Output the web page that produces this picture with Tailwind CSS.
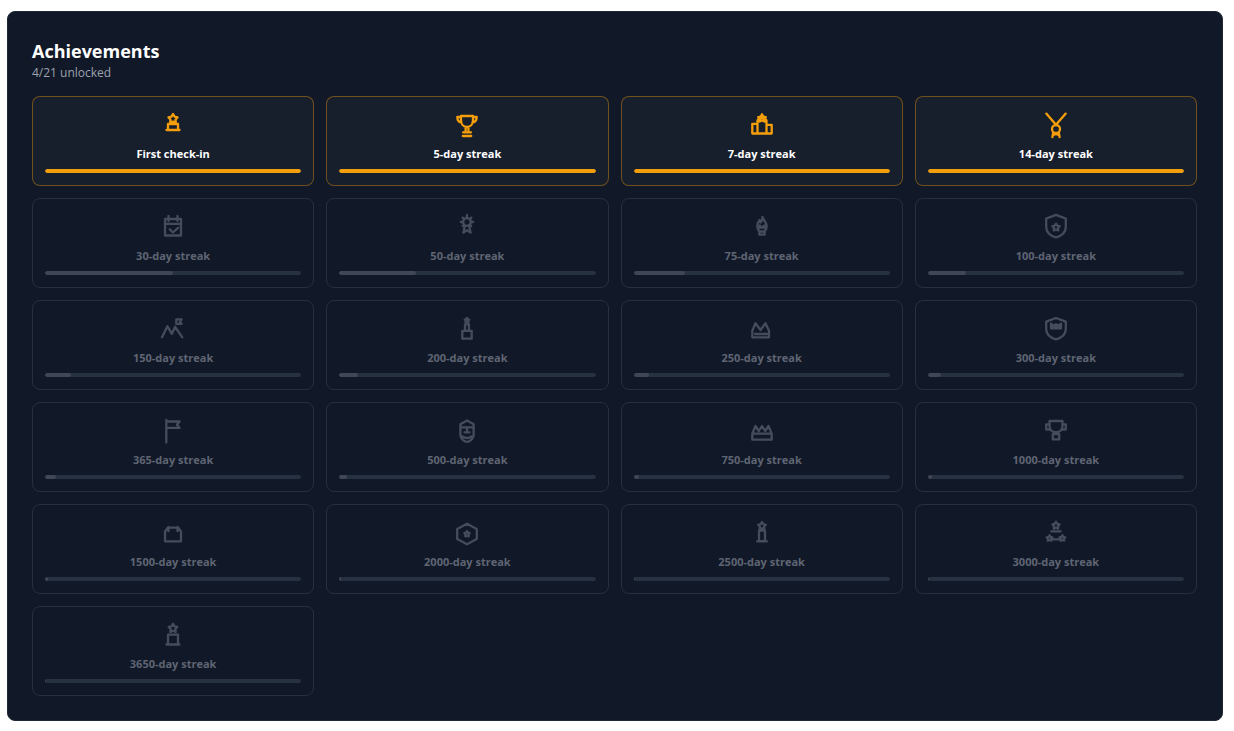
<!DOCTYPE html>
<html lang="en">
<head>
    <meta charset="UTF-8">
    <meta name="viewport" content="width=device-width, initial-scale=1.0">
    <title>Achievements</title>
    <script src="https://cdn.jsdelivr.net/npm/@tailwindcss/browser@4"></script>
</head>
<body class="bg-white font-['Open_Sans','Noto_Sans',sans-serif]">
    <main class="mt-[11px] mr-[11px] ml-[7px]">
        <section class="rounded-lg border border-[#1f2937] bg-[#111827] py-6 pr-[25px] pl-6" aria-labelledby="achievementsTitle">
            <h1 id="achievementsTitle" class="text-[18px] leading-[30px] font-bold text-white">Achievements</h1>
            <p id="unlockedCount" class="mb-4 text-[12px] leading-[14px] text-[#9ca3af]"></p>
            <ul id="achievementGrid" class="grid grid-cols-4 gap-3"></ul>
        </section>
    </main>

    <script>
        const currentStreak = 15;

        // five-pointed star outline around (cx, cy)
        function star(cx, cy, r) {
            const points = [];
            for (let i = 0; i < 10; i++) {
                const radius = i % 2 ? r * 0.55 : r;
                const angle = -Math.PI / 2 + i * Math.PI / 5;
                points.push((cx + radius * Math.cos(angle)).toFixed(2) + ' ' + (cy + radius * Math.sin(angle)).toFixed(2));
            }
            return 'M' + points.join('L') + 'Z';
        }

        // icons are drawn on a 32x32 grid
        const achievements = [
            { days: 1, title: 'First check-in', icon: star(16, 9.8, 4.8) + 'M11 15h10v6H11zM9.5 21h13' },
            { days: 5, icon: 'M10 7h12v4c0 4-2.5 7-6 7s-6-3-6-7zM10 8H6.3c0 3 1.4 5 4.2 5.6M22 8h3.7c0 3-1.4 5-4.2 5.6M14.6 18v5M17.4 18v5M12 23.3h8M11.8 27h8.4' },
            { days: 7, icon: star(16, 9.3, 4) + 'M11.5 11.5h9v13h-9zM12 10.5l4-2 4 2M6.3 14.8h5.2v9.7H6.3zM20.5 15.8h5.2v8.7h-5.2z' },
            { days: 14, icon: 'M6.3 4.6L16 15.8l9.7-11.2M20 20a4 4 0 1 1-8 0a4 4 0 1 1 8 0M13.2 23.8L12.4 28M18.8 23.8l.8 4.2M13 26.3l3-1.3 3 1.3' },
            { days: 30, icon: 'M8 8h16v16.5H8zM8 12.8h16M11.5 5v5M20.5 5v5M12.7 18.3l3.2 3.2 5.2-4.7' },
            { days: 50, icon: 'M19.8 11a3.8 3.8 0 1 1-7.6 0a3.8 3.8 0 1 1 7.6 0M16 4v3M9.8 11h2.4M19.8 11h2.4M11.6 6.6l1.6 1.6M20.4 6.6l-1.6 1.6M11.8 15l1.4-1.4M20.2 15l-1.4-1.4M13.6 15.5L12.4 21.6l3.6-2.3 3.6 2.3-1.2-6.1' },
            { days: 75, icon: 'M16.5 6c.5 3 4.2 5 4.2 9.200 0 2.400-.9 4-2.100 5.100v3.400h-5.200v-3.400c-1.200-1.100-2.100-2.700-2.100-5.100 0-2.800 1.100-4.500 2.300-6.200l1.200 2.400C15.800 10 16.700 8 16.500 6zM13.800 17v-2.500l2.200 2.200 2.200-2.200V17M13.600 20.500h4.800' },
            { days: 100, icon: 'M16 3.8l9.800 3.700v8.200c0 5.200-4 9-9.800 10.800-5.800-1.800-9.800-5.600-9.800-10.800V7.500z' + star(16, 16.4, 3.8) },
            { days: 150, icon: 'M5 24.3l5.400-11 4.500 7.500 3.200-7 7.200 10.500M19.300 10.900V6.400h5.300l-1.600 2.200 1.600 2.300z' },
            { days: 200, icon: 'M11.300 17.800h9.400v7.900h-9.400zM14 17.800v-6.500h4v6.500' + star(16, 7.3, 2.4) },
            { days: 250, icon: 'M6.300 24.300v-6.500l3.200-7.600 5 6.800 5-6.800 3.500 7.600v6.500zM9 21h12' },
            { days: 300, icon: 'M16 5l9.800 3.700V16c0 5.200-4 8.700-9.800 10.400-5.800-1.700-9.800-5.200-9.800-10.400V8.700zM11 15.300v-4.600l2.500 2 2.500-1.500 2.500 1.500 2.500-2v4.600zM12 14h8' },
            { days: 365, icon: 'M9.300 5v22.500M9.300 6.500h13.300l-2.700 3.200 2.700 3.200H9.300' },
            { days: 500, icon: 'M16 5.500l6.600 3.800v11.500c-1 3-3.500 5.300-6.600 6.200-3.100-.9-5.600-3.200-6.600-6.200V9.300zM10 12.300h12M16 12.300v4.700M13.500 17.300h5M11.500 21.500c2.500 2 6.500 2 9 0' },
            { days: 750, icon: 'M6.300 24.700v-6l3.200-7.700 3.300 5L16 11l3.200 5 3.300-5 3.200 7.700v6zM6.500 18.700h19' },
            { days: 1000, icon: 'M9.500 6h13v4.500c0 4-2.700 6.700-6.500 6.700s-6.500-2.700-6.500-6.700zM9.500 9.300H6.200v5.200h4.300M22.500 9.300h3.300v5.200h-4.300M14.500 17.200v2M17.500 17.200v2M12.800 19.200h6.400v5.200h-6.400z' },
            { days: 1500, icon: 'M8 24.300v-9.600l2.700-4h10.600l2.700 4v9.600zM11.500 10v4.200M20.500 10v4.200' },
            { days: 2000, icon: 'M16 6.700l9.800 5.300v10L16 27.200 6.200 22V12z' + star(16, 17, 2.9) },
            { days: 2500, icon: star(16, 9, 4) + 'M13 13.600h6v10.600h-6zM11 24.300h10' },
            { days: 3000, icon: star(16, 8.6, 3.8) + star(9.6, 21.3, 3) + star(22.4, 21.3, 3) + 'M11.300 14.300h9.400M13 22.300h6' },
            { days: 3650, icon: star(16, 9.3, 4.5) + 'M11 15.700h10v9.600H11zM9.500 25.500h13' }
        ];

        function renderCard(item) {
            const unlocked = currentStreak >= item.days;
            const title = item.title || `${item.days}-day streak`;
            const percent = Math.min(100, currentStreak / item.days * 100);
            const card = unlocked ? 'border-[#f59e0b]/40 bg-[#171e2c]' : 'border-[#253040]';
            const icon = unlocked ? 'text-[#f59e0b]' : 'text-[#454c5b]';
            const label = unlocked ? 'text-white' : 'text-[#5f6573]';
            const track = unlocked ? 'bg-[#374151]' : 'bg-[#263142]';
            const fill = unlocked ? 'bg-[#f59e0b]' : 'bg-[#414755]';

            return `
                <li class="flex flex-col items-center rounded-lg border p-3 ${card}">
                    <svg class="size-8 ${icon}" viewBox="0 0 32 32" fill="none" stroke="currentColor" stroke-width="2.3" stroke-linecap="round" stroke-linejoin="round" aria-hidden="true">
                        <path d="${item.icon}"/>
                    </svg>
                    <h2 class="mt-1 text-[11px] leading-[18px] font-bold ${label}">${title}</h2>
                    <div class="mt-[6px] h-1 w-full overflow-hidden rounded-full ${track}" role="progressbar" aria-label="${title}" aria-valuenow="${Math.round(percent)}">
                        <div class="h-full rounded-full ${fill}" style="width: ${percent}%"></div>
                    </div>
                </li>`;
        }

        const unlockedTotal = achievements.filter(item => currentStreak >= item.days).length;
        document.getElementById('unlockedCount').textContent = `${unlockedTotal}/${achievements.length} unlocked`;
        document.getElementById('achievementGrid').innerHTML = achievements.map(renderCard).join('');
    </script>
</body>
</html>
